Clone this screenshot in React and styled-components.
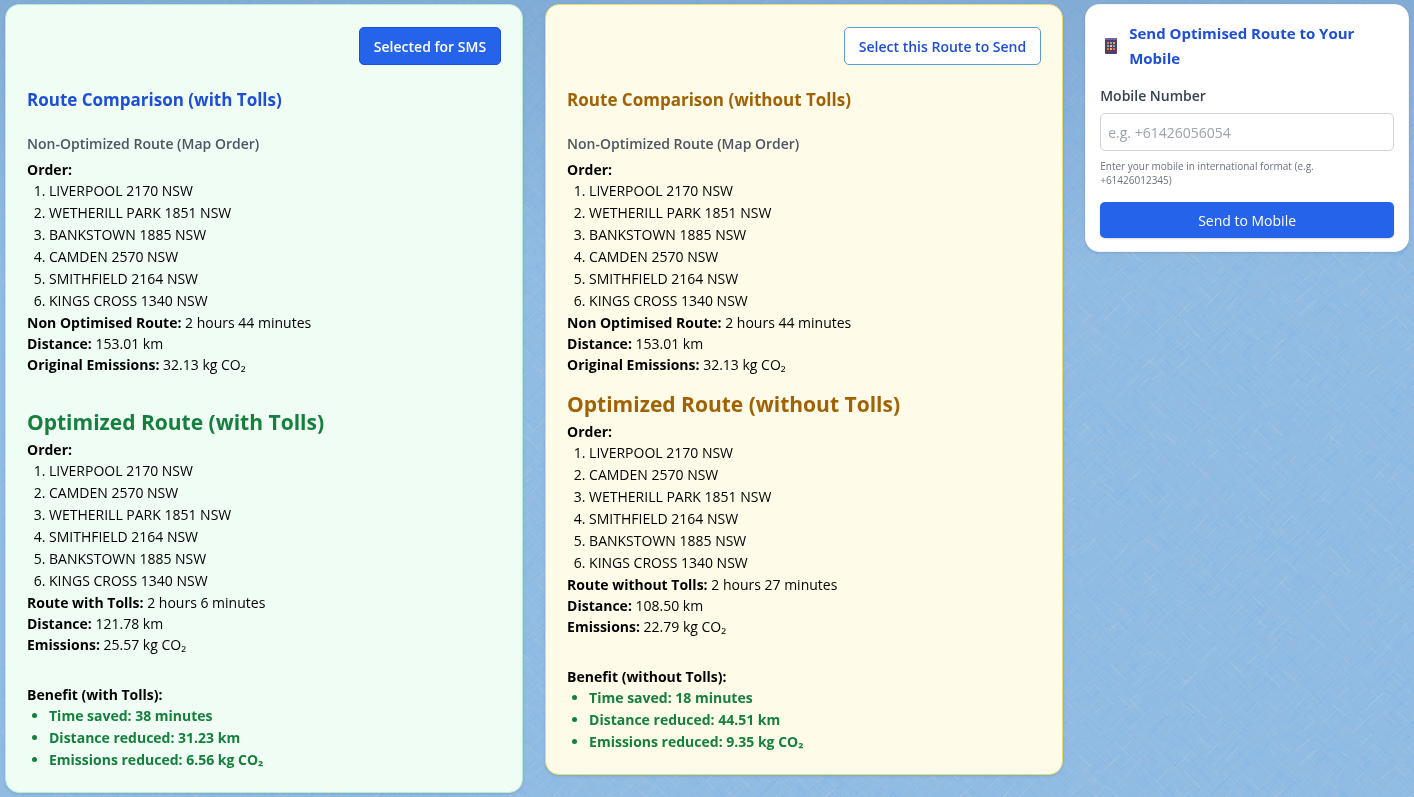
import React, { useState } from 'react';
import styled, { createGlobalStyle, css } from 'styled-components';

const GlobalStyle = createGlobalStyle`
*{ box-sizing: border-box; }
body{
  margin: 0;
  background: #8fbae3;
  color: #000;
  font-family: "Open Sans", "Noto Sans", sans-serif;
  font-size: 14px;
}
button, input{ font-family: inherit; }
`;

const Backdrop = styled.svg`
  position: fixed;
  top: 0;
  left: 0;
  width: 100%;
  height: 100%;
  z-index: -1;
`;

const Page = styled.main`
  display: grid;
  grid-template-columns: minmax(0, 8fr) minmax(0, 8fr) minmax(0, 5fr);
  align-items: start;
  gap: 22px;
  padding: 4px 5px;
`;

const tones = {
  green: { background: '#f0fdf4', border: '#b4efd6', title: '#1d4ed8', heading: '#15803d' },
  yellow: { background: '#fefce8', border: '#e6de72', title: '#a16207', heading: '#a16207' },
};

const Card = styled.section`
  border-radius: 14px;
  box-shadow: 0 1px 3px rgba(0, 0, 0, .12);
`;

const RouteCard = styled(Card)`
  padding: 22px 21px 21px;
  border: 1px solid ${p => tones[p.$tone].border};
  background: ${p => tones[p.$tone].background};
`;

const CardActions = styled.div`
  display: flex;
  justify-content: flex-end;
`;

const SelectButton = styled.button`
  height: 38px;
  padding: 0 14px;
  border: 1px solid #5b9be0;
  border-radius: 5px;
  background: #fff;
  color: #1d4ed8;
  font-size: 14px;
  font-weight: 600;
  cursor: pointer;
  ${p => p.$selected && css`
    border-color: #1d4ed8;
    background: #2563eb;
    color: #fff;
  `}
`;

const CardTitle = styled.h2`
  margin: 21px 0 19px;
  color: ${p => tones[p.$tone].title};
  font-size: 17px;
  font-weight: 700;
  line-height: 28px;
`;

const SubTitle = styled.h3`
  margin: 0 0 5px;
  color: #4b5563;
  font-size: 14px;
  font-weight: 600;
  line-height: 21px;
`;

const OptimizedTitle = styled.h3`
  margin: ${p => (p.$spaced ? 32 : 14)}px 0 2px;
  color: ${p => tones[p.$tone].heading};
  font-size: 21px;
  font-weight: 700;
  line-height: 30px;
`;

const Line = styled.div`
  line-height: 21px;
`;

const Stops = styled.ol`
  margin: 0;
  padding-left: 22px;
  line-height: 22px;
`;

const Benefit = styled.div`
  margin-top: 29px;
`;

const BenefitList = styled.ul`
  margin: 0;
  padding-left: 22px;
  color: #15803d;
  font-weight: 700;
  line-height: 22px;
`;

const SmsCard = styled(Card)`
  padding: 16px 14px 13px;
  border: 1px solid #f3f4f6;
  background: #fff;
`;

const SmsTitle = styled.h2`
  display: flex;
  align-items: center;
  gap: 7px;
  margin: 0 0 14px;
  color: #1d4ed8;
  font-size: 15px;
  font-weight: 700;
  line-height: 25px;
`;

const PhoneIcon = styled.svg`
  flex: none;
  width: 22px;
  height: 22px;
`;

const Label = styled.label`
  display: block;
  margin-bottom: 6px;
  color: #374151;
  font-weight: 600;
  line-height: 22px;
`;

const MobileInput = styled.input`
  display: block;
  width: 100%;
  height: 38px;
  padding: 0 7px;
  border: 1px solid #d1d5db;
  border-radius: 5px;
  background: #fff;
  font-size: 14px;
  &::placeholder{ color: #9ca3af; }
`;

const Hint = styled.p`
  margin: 8px 0 15px;
  padding-right: 14px;
  color: #6b7280;
  font-size: 10px;
  line-height: 14px;
`;

const SendButton = styled.button`
  display: block;
  width: 100%;
  height: 36px;
  border: 0;
  border-radius: 5px;
  background: #2563eb;
  box-shadow: 0 1px 2px rgba(0, 0, 0, .15);
  color: #fff;
  font-size: 14px;
  font-weight: 500;
  cursor: pointer;
`;

const routes = [
  {
    id: 'tolls',
    tone: 'green',
    label: 'with Tolls',
    spaced: true,
    optimized: ['LIVERPOOL 2170 NSW', 'CAMDEN 2570 NSW', 'WETHERILL PARK 1851 NSW', 'SMITHFIELD 2164 NSW', 'BANKSTOWN 1885 NSW', 'KINGS CROSS 1340 NSW'],
    time: '2 hours 6 minutes',
    distance: '121.78 km',
    emissions: '25.57 kg CO₂',
    saved: ['38 minutes', '31.23 km', '6.56 kg CO₂'],
  },
  {
    id: 'noTolls',
    tone: 'yellow',
    label: 'without Tolls',
    spaced: false,
    optimized: ['LIVERPOOL 2170 NSW', 'CAMDEN 2570 NSW', 'WETHERILL PARK 1851 NSW', 'SMITHFIELD 2164 NSW', 'BANKSTOWN 1885 NSW', 'KINGS CROSS 1340 NSW'],
    time: '2 hours 27 minutes',
    distance: '108.50 km',
    emissions: '22.79 kg CO₂',
    saved: ['18 minutes', '44.51 km', '9.35 kg CO₂'],
  },
];

const mapOrder = ['LIVERPOOL 2170 NSW', 'WETHERILL PARK 1851 NSW', 'BANKSTOWN 1885 NSW', 'CAMDEN 2570 NSW', 'SMITHFIELD 2164 NSW', 'KINGS CROSS 1340 NSW'];

// crossed diagonal threads, same seed every time so the cloth does not flicker
const makeThreads = (count, seed, maxLength) => {
  let s = seed;
  const rnd = () => {
    s = (s * 16807) % 2147483647;
    return s / 2147483647;
  };
  let d = '';
  for (let i = 0; i < count; i++) {
    const x = Math.round(rnd() * 450);
    const y = Math.round(rnd() * 450);
    const len = Math.round(4 + rnd() * maxLength);
    const dir = rnd() > 0.5 ? 1 : -1;
    d += `M${x} ${y}l${len} ${dir * Math.round(len * (0.8 + rnd() * 0.3))}`;
  }
  return d;
};

const darkThreads = makeThreads(2600, 93371, 16);
const lightThreads = makeThreads(2200, 716253, 16);
const softThreads = makeThreads(1400, 559017, 20);
const brightThreads = makeThreads(220, 4242421, 14);

const Cloth = () => (
  <Backdrop aria-hidden="true">
    <defs>
      <pattern id="cloth" width="450" height="450" patternUnits="userSpaceOnUse">
        <rect width="450" height="450" fill="#90bce4" />
        <path d={darkThreads} stroke="#7cb2e4" strokeOpacity=".45" fill="none" />
        <path d={lightThreads} stroke="#a3c1df" strokeOpacity=".5" fill="none" />
        <path d={softThreads} stroke="#95bbe1" strokeOpacity=".6" strokeWidth="2" fill="none" />
        <path d={brightThreads} stroke="#b4cbe0" strokeOpacity=".6" fill="none" />
      </pattern>
      <linearGradient id="shade" x1="0" y1="0" x2="0" y2="1">
        <stop offset="0" stopColor="#5f86b5" stopOpacity=".3" />
        <stop offset=".35" stopColor="#5f86b5" stopOpacity="0" />
      </linearGradient>
    </defs>
    <rect width="100%" height="100%" fill="url(#cloth)" />
    <rect width="100%" height="100%" fill="url(#shade)" />
  </Backdrop>
);

const dots = ['#e8734a', '#5fb4e5', '#f0a24c', '#6db8e8', '#f4d35e', '#5fb4e5', '#e8734a', '#f2b25c', '#e56b4e'];

const RouteStops = ({ stops }) => (
  <>
    <Line><strong>Order:</strong></Line>
    <Stops>
      {stops.map(stop => <li key={stop}>{stop}</li>)}
    </Stops>
  </>
);

const RoutePanel = ({ route, selected, onSelect }) => (
  <RouteCard $tone={route.tone}>
    <CardActions>
      <SelectButton type="button" $selected={selected} aria-pressed={selected} onClick={onSelect}>
        {selected ? 'Selected for SMS' : 'Select this Route to Send'}
      </SelectButton>
    </CardActions>
    <CardTitle $tone={route.tone}>Route Comparison ({route.label})</CardTitle>

    <SubTitle>Non-Optimized Route (Map Order)</SubTitle>
    <RouteStops stops={mapOrder} />
    <Line><strong>Non Optimised Route:</strong> 2 hours 44 minutes</Line>
    <Line><strong>Distance:</strong> 153.01 km</Line>
    <Line><strong>Original Emissions:</strong> 32.13 kg CO₂</Line>

    <OptimizedTitle $tone={route.tone} $spaced={route.spaced}>Optimized Route ({route.label})</OptimizedTitle>
    <RouteStops stops={route.optimized} />
    <Line><strong>Route {route.label}:</strong> {route.time}</Line>
    <Line><strong>Distance:</strong> {route.distance}</Line>
    <Line><strong>Emissions:</strong> {route.emissions}</Line>

    <Benefit>
      <Line><strong>Benefit ({route.label}):</strong></Line>
      <BenefitList>
        <li>Time saved: {route.saved[0]}</li>
        <li>Distance reduced: {route.saved[1]}</li>
        <li>Emissions reduced: {route.saved[2]}</li>
      </BenefitList>
    </Benefit>
  </RouteCard>
);

const App = () => {
  const [selected, setSelected] = useState('tolls');
  const [mobile, setMobile] = useState('');

  return (
    <>
      <GlobalStyle />
      <Cloth />
      <Page>
        {routes.map(route => (
          <RoutePanel
            key={route.id}
            route={route}
            selected={selected === route.id}
            onSelect={() => setSelected(route.id)}
          />
        ))}
        <SmsCard>
          <SmsTitle>
            <PhoneIcon viewBox="0 0 22 22" aria-hidden="true">
              <rect x="5" y="3" width="12" height="16" rx="1" fill="#4a3f78" />
              <rect x="5" y="3" width="12" height="2" fill="#75659c" />
              <rect x="6" y="6" width="10" height="11" fill="#5b3d58" />
              {dots.map((fill, i) => (
                <rect key={i} x={7 + (i % 3) * 3} y={7 + Math.floor(i / 3) * 3} width="2" height="2" fill={fill} />
              ))}
            </PhoneIcon>
            <span>Send Optimised Route to Your Mobile</span>
          </SmsTitle>
          <form onSubmit={e => e.preventDefault()}>
            <Label htmlFor="mobile">Mobile Number</Label>
            <MobileInput
              id="mobile"
              type="tel"
              placeholder="e.g. +61426056054"
              value={mobile}
              onChange={e => setMobile(e.target.value)}
            />
            <Hint>Enter your mobile in international format (e.g. +61426012345)</Hint>
            <SendButton type="submit">Send to Mobile</SendButton>
          </form>
        </SmsCard>
      </Page>
    </>
  );
};

export default App;
